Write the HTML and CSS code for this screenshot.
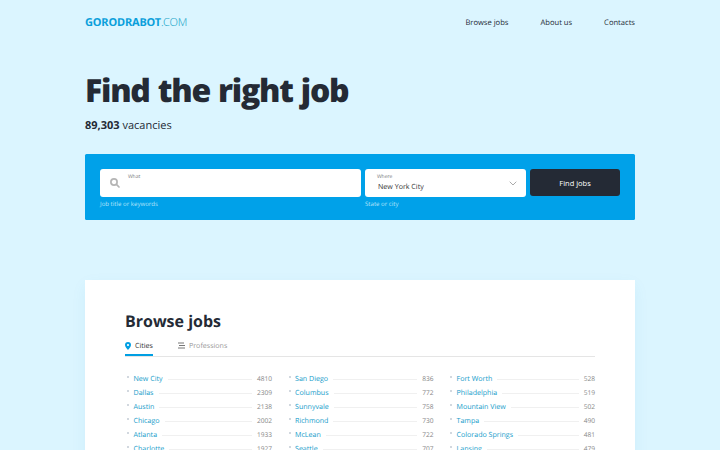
FILE: index.html
```html
<!DOCTYPE html>
<html lang="en">
<head>
    <meta charset="UTF-8">
    <title>Gorodrabot.com</title>
    <link rel="stylesheet" href="styles.css">
</head>
<body>
    <div class="container">
        <header class="header">
            <a class="logo" href="#"><b>GORODRABOT</b><span>.COM</span></a>
            <nav class="nav">
                <a href="#">Browse jobs</a>
                <a href="#">About us</a>
                <a href="#">Contacts</a>
            </nav>
        </header>

        <h1>Find the right job</h1>
        <p class="vacancies"><b>89,303</b> vacancies</p>

        <form class="search">
            <div class="field what">
                <label class="box">
                    <svg class="search-icon" viewBox="0 0 10 10"><circle cx="4" cy="4" r="3.1"/><path d="M6.4 6.4L9 9"/></svg>
                    <span class="label">What</span>
                </label>
                <div class="hint">Job title or keywords</div>
            </div>
            <div class="field where">
                <div class="box">
                    <span class="label">Where</span>
                    <span class="value">New York City</span>
                    <svg class="arrow" viewBox="0 0 8 5"><path d="M.7 .7L4 4L7.3 .7"/></svg>
                </div>
                <div class="hint">State or city</div>
            </div>
            <button type="button">Find jobs</button>
        </form>

        <section class="browse">
            <h2>Browse jobs</h2>
            <div class="tabs">
                <a class="tab active" href="#"><svg class="pin" viewBox="0 0 6 8"><path fill-rule="evenodd" d="M3 0a3 3 0 0 1 3 3C6 4.800 4.400 6 3 8C1.600 6 0 4.800 0 3a3 3 0 0 1 3-3zM3 1.900a1.100 1.100 0 1 0 0 2.200a1.100 1.100 0 1 0 0-2.200z"/></svg>Cities</a>
                <a class="tab" href="#"><svg class="lines" viewBox="0 0 7 7"><path d="M0 1H6M1 3.500H7M0 6H7"/></svg>Professions</a>
            </div>
            <div class="columns">
                <ul>
                    <li><a href="#">New City</a><i></i><span>4810</span></li>
                    <li><a href="#">Dallas</a><i></i><span>2309</span></li>
                    <li><a href="#">Austin</a><i></i><span>2138</span></li>
                    <li><a href="#">Chicago</a><i></i><span>2002</span></li>
                    <li><a href="#">Atlanta</a><i></i><span>1933</span></li>
                    <li><a href="#">Charlotte</a><i></i><span>1927</span></li>
                </ul>
                <ul>
                    <li><a href="#">San Diego</a><i></i><span>836</span></li>
                    <li><a href="#">Columbus</a><i></i><span>772</span></li>
                    <li><a href="#">Sunnyvale</a><i></i><span>758</span></li>
                    <li><a href="#">Richmond</a><i></i><span>730</span></li>
                    <li><a href="#">McLean</a><i></i><span>722</span></li>
                    <li><a href="#">Seattle</a><i></i><span>707</span></li>
                </ul>
                <ul>
                    <li><a href="#">Fort Worth</a><i></i><span>528</span></li>
                    <li><a href="#">Philadelphia</a><i></i><span>519</span></li>
                    <li><a href="#">Mountain View</a><i></i><span>502</span></li>
                    <li><a href="#">Tampa</a><i></i><span>490</span></li>
                    <li><a href="#">Colorado Springs</a><i></i><span>481</span></li>
                    <li><a href="#">Lansing</a><i></i><span>479</span></li>
                </ul>
            </div>
        </section>
    </div>
</body>
</html>
```
FILE: styles.css
```css
* {
    box-sizing: border-box;
}
body {
    margin: 0;
    height: 450px;
    overflow: hidden;
    background: #dbf5ff;
    color: #242a35;
    font-family: "Open Sans", "Noto Sans", sans-serif;
    text-rendering: geometricPrecision;
}
a {
    text-decoration: none;
    color: inherit;
}
.container {
    width: 550px;
    margin: 0 auto;
}
.header {
    display: flex;
    justify-content: space-between;
    align-items: center;
    height: 45px;
}
.logo {
    font-family: "Noto Sans", sans-serif;
    font-size: 11px;
    letter-spacing: -0.15px;
    color: #0b9fdb;
    white-space: nowrap;
}
.logo span {
    font-weight: 300;
    color: #25a7c9;
}
.nav {
    display: flex;
    gap: 32px;
    font-size: 7.6px;
}
h1 {
    margin: 24px 0 0;
    font-size: 32px;
    line-height: 44px;
    font-weight: 800;
    letter-spacing: -1.25px;
    word-spacing: 1px;
}
.vacancies {
    margin: 4px 0 0;
    font-size: 11px;
    line-height: 17px;
}

/* Search form */
.search {
    display: flex;
    gap: 4px;
    height: 66px;
    margin-top: 20px;
    padding: 15px;
    border-radius: 1.5px;
    background: #00a1e9;
}
.what {
    width: 261px;
}
.where {
    width: 161px;
}
.box {
    display: block;
    position: relative;
    height: 28px;
    padding: 4px 12px;
    border-radius: 3px;
    background: #fff;
}
.what .box {
    padding-left: 28px;
}
.label {
    display: block;
    font-size: 5px;
    line-height: 8px;
    color: #777;
}
.value {
    display: block;
    padding-left: 1px;
    font-size: 7.1px;
    line-height: 12px;
    color: #333;
}
.search-icon {
    position: absolute;
    left: 10px;
    top: 9px;
    width: 10px;
    height: 10px;
    fill: none;
    stroke: #b5b5b5;
    stroke-width: 1.7;
    stroke-linecap: round;
}
.arrow {
    position: absolute;
    right: 9px;
    top: 12px;
    width: 8px;
    height: 5px;
    fill: none;
    stroke: #aaa;
}
.hint {
    margin-top: 2px;
    font-size: 6.1px;
    line-height: 9px;
    color: #b5e4fa;
}
.search button {
    width: 90px;
    height: 27px;
    padding: 0;
    border: none;
    border-radius: 3px;
    background: #242a35;
    color: #fff;
    font-family: inherit;
    font-size: 7.5px;
}

/* Job list */
.browse {
    height: 500px;
    margin-top: 60px;
    padding: 30px 40px;
    background: #fff;
    box-shadow: 0 5px 15px rgba(0, 140, 200, 0.06);
}
h2 {
    margin: 0;
    font-size: 16px;
    line-height: 23px;
}
.tabs {
    display: flex;
    gap: 25px;
    height: 24px;
    border-bottom: 1px solid #e5e5e5;
    font-size: 7.1px;
    color: #999;
}
.tab {
    display: flex;
    align-items: center;
    height: 23px;
    padding-top: 4px;
    border-bottom: 2px solid transparent;
}
.active {
    color: #333;
    border-color: #009fe3;
}
.tab svg {
    width: 6px;
    height: 8px;
    margin-right: 4px;
    fill: #009fe3;
}
.tab .lines {
    width: 7px;
    height: 7px;
    fill: none;
    stroke: #777;
}
.columns {
    display: grid;
    grid-template-columns: repeat(3, 147px);
    gap: 14.5px;
    margin-top: 14px;
}
ul {
    margin: 0;
    padding: 0;
    list-style: none;
}
li {
    display: flex;
    align-items: center;
    height: 14px;
    font-size: 7.1px;
}
li::before {
    content: "";
    width: 2px;
    height: 2px;
    margin: -2px 4.5px 0 2px;
    border-radius: 50%;
    background: #c3cbd5;
}
li a {
    padding-top: 1px;
    color: #159cca;
}
li i {
    flex: 1;
    height: 1px;
    margin: 2px 5px 0;
    background: #f0f0f0;
}
li span {
    font-size: 6.6px;
    color: #888;
}
```
